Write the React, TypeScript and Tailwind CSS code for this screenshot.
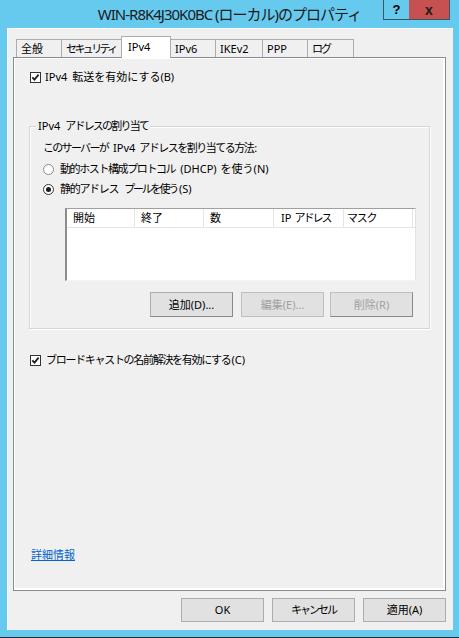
import React from "react";

const ui = "font-['Noto_Sans','Noto_Sans_CJK_JP',sans-serif] text-[11px] leading-[14px] text-black";

const Check = () => (
  <span className="flex h-[11px] w-[11px] shrink-0 items-center justify-center border border-[#333333] bg-white">
    <svg width="9" height="9" viewBox="0 0 9 9">
      <path d="M1.3 4.3 L3.5 6.6 L7.6 1.6" stroke="#1a1a1a" strokeWidth="1.7" fill="none" />
    </svg>
  </span>
);

const Radio = (props: { on?: boolean }) => (
  <span
    className={`flex h-[11px] w-[11px] shrink-0 items-center justify-center rounded-full border bg-white ${
      props.on ? "border-[#333333]" : "border-[#8a8a8a]"
    }`}
  >
    {props.on && <span className="h-[5px] w-[5px] rounded-full bg-[#1a1a1a]" />}
  </span>
);

const Button = (props: { label: string; disabled?: boolean; className?: string }) => (
  <div
    className={`flex h-[24px] w-[83px] items-center justify-center border bg-[#e1e1e1] ${
      props.disabled ? "border-[#bfbfbf] text-[#a0a0a0]" : "border-[#adadad]"
    } ${props.className ?? ""}`}
  >
    {props.label}
  </div>
);

const tabs = [
  { label: "全般", w: "w-[46px]", t: "" },
  { label: "セキュリティ", w: "w-[61px]", t: "tracking-[-2.6px]" },
  { label: "IPv4", w: "w-[50px]", t: "", active: true },
  { label: "IPv6", w: "w-[46px]", t: "" },
  { label: "IKEv2", w: "w-[48px]", t: "" },
  { label: "PPP", w: "w-[46px]", t: "" },
  { label: "ログ", w: "w-[47px]", t: "tracking-[-2px]" },
];

export default function App() {
  return (
    <div className={`flex h-[638px] w-[459px] flex-col border-b border-[#1f2b33] bg-[#66c9ee] ${ui}`}>
      {/* title bar */}
      <div className="relative h-[28px] shrink-0">
        <div className="pt-[5px] text-center text-[15px] leading-[18px] tracking-[-1px] text-[#1b1b1b]">
          WIN-R8K4J30K0BC (ローカル)のプロパティ
        </div>
        <div className="absolute right-[9px] top-0 flex h-[20px]">
          <div className="flex w-[26px] items-center justify-center border-b border-l border-[#3b5566] bg-[#66c9ee] font-['Liberation_Sans',sans-serif] text-[13px] font-bold">
            ?
          </div>
          <div className="flex w-[41px] items-center justify-center border-b border-r border-[#3b5566] bg-[#c75050] font-['Liberation_Sans',sans-serif] text-[14px] font-bold text-[#1b1b1b]">
            x
          </div>
        </div>
      </div>

      {/* client area */}
      <div className="ml-[7px] mr-[6px] flex h-[602px] flex-col bg-[#f0f0f0] pl-[6px] pr-[7px] pt-[8px] shadow-[inset_1px_1px_0_#ffffff]">
        <div className="flex h-[21px] items-end pl-[3px]">
          {tabs.map((t, i) =>
            t.active ? (
              <div
                key={t.label}
                className={`relative z-10 -mb-px -ml-px flex h-[22px] ${t.w} items-start whitespace-nowrap border-x border-t border-[#acacac] bg-white pl-[6px] pt-[3px]`}
              >
                {t.label}
              </div>
            ) : (
              <div
                key={t.label}
                className={`${i === 0 ? "" : "-ml-px"} flex h-[18px] ${t.w} ${t.t} items-center whitespace-nowrap border-x border-t border-[#acacac] bg-[#f0f0f0] pl-[4px] pt-px`}
              >
                {t.label}
              </div>
            )
          )}
        </div>

        {/* tab page */}
        <div className="flex h-[534px] flex-col border border-[#898c95] bg-[#f0f0f0] shadow-[inset_1px_1px_0_#ffffff,inset_-2px_-2px_0_#ffffff]">
          <div className="ml-[16px] mt-[12px] flex h-[14px] items-center gap-[4px]">
            <Check />
            <span className="flex gap-[5px]">
              <span>IPv4</span>
              <span>転送を有効にする(B)</span>
            </span>
          </div>

          {/* group box */}
          <div className="ml-[15px] mt-[42px] flex h-[203px] w-[401px] flex-col border border-[#d5d5d5] shadow-[inset_1px_1px_0_#ffffff,1px_1px_0_#ffffff]">
            <div className="-mt-[8px] ml-[6px] flex h-[14px] w-fit gap-[5px] bg-[#f0f0f0] px-[2px]">
              <span>IPv4</span>
              <span className="tracking-[-1.8px]">アドレスの割り当て</span>
            </div>
            <div className="ml-[13px] mt-[8px] flex h-[14px]">
              <span className="tracking-[-1.7px]">このサーバーが</span>
              <span className="ml-[5px]">IPv4</span>
              <span className="ml-[4px] tracking-[-1.5px]">アドレスを割り当てる方法</span>
              <span className="ml-[1px]">:</span>
            </div>
            <div className="ml-[13px] mt-[7px] flex h-[14px] items-center gap-[6px]">
              <Radio />
              <span className="flex">
                <span className="tracking-[-1.4px]">動的ホスト構成プロトコル</span>
                <span className="ml-[5px]">(DHCP)</span>
                <span className="ml-[4px]">を使う(N)</span>
              </span>
            </div>
            <div className="ml-[13px] mt-[6px] flex h-[14px] items-center gap-[6px]">
              <Radio on />
              <span className="flex">
                <span className="tracking-[-1.3px]">静的アドレス</span>
                <span className="ml-[6px] tracking-[-2.2px]">プールを使う</span>
                <span className="ml-[2px]">(S)</span>
              </span>
            </div>

            {/* list view */}
            <div className="ml-[35px] mt-[12px] flex h-[73px] w-[351px] flex-col border-b border-l-2 border-r border-t border-b-[#f4f4f4] border-l-[#8d8d8d] border-r-[#e3e3e3] border-t-[#a0a0a0] bg-white">
              <div className="flex h-[19px] border-b border-[#e5e5e5]">
                <div className="flex w-[68px] items-center border-r border-[#e5e5e5] pl-[6px]">開始</div>
                <div className="flex w-[69px] items-center border-r border-[#e5e5e5] pl-[6px]">終了</div>
                <div className="flex w-[70px] items-center border-r border-[#e5e5e5] pl-[6px]">数</div>
                <div className="flex w-[70px] items-center gap-[3px] border-r border-[#e5e5e5] pl-[7px]">
                  <span>IP</span>
                  <span className="tracking-[-2px]">アドレス</span>
                </div>
                <div className="flex w-[69px] items-center border-r border-[#e5e5e5] pl-[3px] tracking-[-1.3px]">マスク</div>
              </div>
            </div>

            <div className="ml-[120px] mt-[11px] flex">
              <Button label="追加(D)..." className="h-[25px] border-b-[#8a8a8a] border-r-[#8a8a8a]" />
              <Button label="編集(E)..." disabled className="ml-[8px] h-[25px]" />
              <Button label="削除(R)" disabled className="ml-[6px] h-[25px] border-b-[#8a8a8a] border-r-[#8a8a8a]" />
            </div>
          </div>

          <div className="ml-[16px] mt-[24px] flex h-[14px] items-center gap-[5px]">
            <Check />
            <span className="flex">
              <span className="tracking-[-1.3px]">ブロードキャストの名前解決を有効にする</span>
              <span className="ml-[1px]">(C)</span>
            </span>
          </div>

          <div className="ml-[17px] mt-[181px] h-[14px] w-fit text-[#0066cc] underline">詳細情報</div>
        </div>

        {/* dialog buttons */}
        <div className="mt-[7px] flex justify-end gap-[8px]">
          <Button label="OK" />
          <Button label="キャンセル" className="tracking-[-2px]" />
          <Button label="適用(A)" />
        </div>
      </div>
    </div>
  );
}
